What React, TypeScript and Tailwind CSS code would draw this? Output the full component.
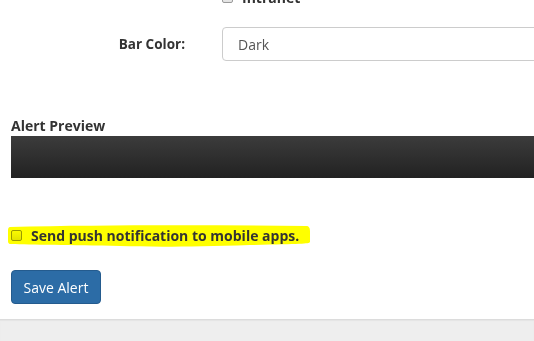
import React from "react";

function Checkbox() {
  return (
    <span className="inline-block w-[11px] h-[11px] rounded-[2px] border border-[#9a9a9a] bg-gradient-to-b from-[#fafafa] to-[#e2e2e2] shrink-0" />
  );
}

export default function App() {
  return (
    <div
      className="w-[534px] h-[341px] overflow-hidden bg-white flex flex-col text-[#333]"
      style={{ fontFamily: "'Open Sans', 'Liberation Sans', sans-serif" }}
    >
      <div className="flex-1">
        {/* clipped Intranet checkbox */}
        <div className="flex items-center gap-[9px] pl-[222px] mt-[-13px] h-[20px]">
          <Checkbox />
          <span className="text-[14px] font-bold">Intranet</span>
        </div>

        {/* Bar color row */}
        <div className="flex items-center mt-[20px] h-[34px]">
          <label className="w-[186px] shrink-0 text-right pr-[1px] text-[13.5px] font-bold">Bar Color:</label>
          <div className="ml-[36px] w-[340px] h-[34px] shrink-0 rounded-[4px] border border-[#ccc] flex items-center pl-[15px] text-[14px] text-[#555]">
            Dark
          </div>
        </div>

        {/* Alert preview */}
        <div className="pl-[11px] mt-[55px]">
          <div className="text-[14px] font-bold leading-[20px]">Alert Preview</div>
          <div className="h-[42px] bg-gradient-to-b from-[#3c3c3c] to-[#222]" />
        </div>

        {/* Push notification, hand-drawn highlighter over it */}
        <div className="relative pl-[11px] mt-[47px] h-[20px] flex items-center gap-[9px]">
          <svg
            className="absolute left-0 top-0 mix-blend-multiply pointer-events-none"
            width="320"
            height="26"
            viewBox="0 0 320 26"
          >
            <path
              d="M10 2 C100 0 200 0 306 1 C309 1 310 3 310 6 L310 17 C309 19 300 19 250 20 C190 22 150 22 120 21 C70 20 30 20 11 19 C8 19 8 17 8 15 L8 5 C8 3 9 2 10 2 Z"
              fill="#ffff00"
            />
          </svg>
          <Checkbox />
          <span className="relative text-[14px] font-bold text-[#333]">Send push notification to mobile apps.</span>
        </div>

        {/* Save button */}
        <div className="pl-[11px] mt-[25px]">
          <button className="w-[90px] h-[34px] rounded-[4px] bg-[#2c6ca6] border border-[#245b8e] text-white text-[14px]">
            Save Alert
          </button>
        </div>
      </div>

      <div className="h-[22px] bg-[#eeeeee] border-t border-[#dcdcdc] shadow-[inset_0_1px_1px_rgba(0,0,0,0.04)]" />
    </div>
  );
}
